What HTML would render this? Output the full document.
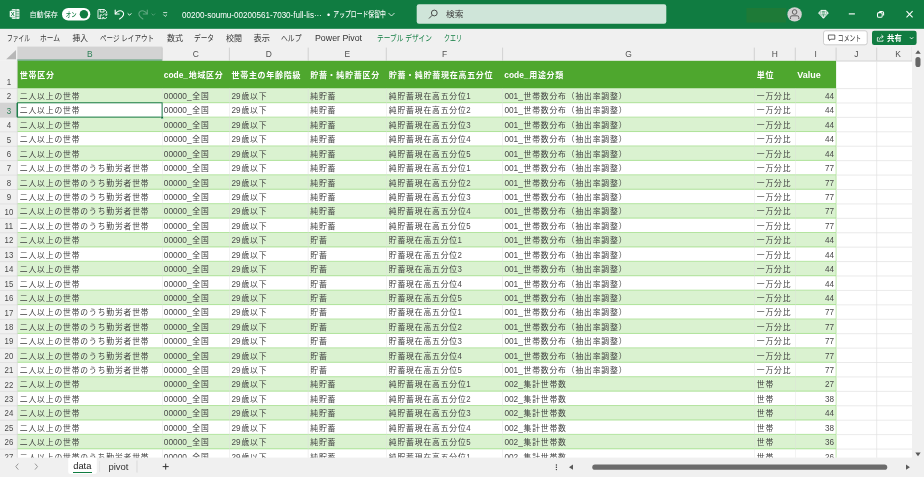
<!DOCTYPE html>
<html lang="ja"><head><meta charset="utf-8"><title>Excel</title>
<style>html,body{margin:0;padding:0;background:#f0f0f0;overflow:hidden}svg{display:block;font-family:"Liberation Sans","Noto Sans CJK JP",sans-serif;will-change:transform}text{white-space:pre}</style>
</head><body>
<svg width="924" height="477" viewBox="0 0 924 477">
<rect x="0.00" y="0.00" width="924.00" height="477.00" fill="#f0f0f0" />
<rect x="0.00" y="0.00" width="924.00" height="28.80" fill="#107c41" />
<rect x="416.7" y="4.2" width="249.6" height="19.6" rx="2.2" fill="#cfe5d9"/>
<rect x="746.50" y="8.00" width="39.50" height="14.50" fill="#1e7a37" />
<g><rect x="11.7" y="8.9" width="7.8" height="10.1" rx="1" fill="#dcece3"/><path d="M11.7 11.4 H19.5 M11.7 13.9 H19.5 M11.7 16.4 H19.5" stroke="#107c41" stroke-width="0.55"/><path d="M16 8.9 V19" stroke="#107c41" stroke-width="0.5"/><rect x="9.6" y="10.7" width="6" height="6.5" rx="0.8" fill="#fff" stroke="#107c41" stroke-width="0.35"/><text x="12.6" y="15.95" font-size="5.8" font-weight="700" fill="#107c41" text-anchor="middle">X</text></g>
<text x="29.50" y="17.20" font-size="7.3" fill="#fff" textLength="28.50" lengthAdjust="spacingAndGlyphs" >自動保存</text>
<rect x="62" y="8" width="28.3" height="12.5" rx="6.25" fill="#fff"/>
<text x="65.80" y="16.92" font-size="6.8" fill="#107c41" font-weight="500" textLength="10.80" lengthAdjust="spacingAndGlyphs" >オン</text>
<circle cx="83.9" cy="14.3" r="4.2" fill="#107c41"/>
<g fill="none" stroke="#fff" stroke-width="0.9" stroke-linejoin="round"><path d="M101.6 18.6 H98.9 a0.9 0.9 0 0 1 -.9 -.9 V10.4 a0.9 0.9 0 0 1 .9 -.9 H104.4 L106.6 11.7 V13.2"/><path d="M100.2 9.6 V12 H104 V9.6"/><path d="M100.2 18.5 V14.9 H102"/><path d="M102.7 15.7 a2.2 2.2 0 0 1 3.9 -.8 M106.9 13.5 V15.2 H105.2" stroke-width="0.8"/><path d="M106.8 17 a2.2 2.2 0 0 1 -3.9 .8 M102.6 19.2 V17.5 H104.3" stroke-width="0.8"/></g>
<g fill="none" stroke="#fff" stroke-width="1.1" stroke-linecap="round" stroke-linejoin="round"><path d="M115.2 10 V14 H119.2"/><path d="M115.4 13.8 C117 11 120.5 9.8 122.6 11.6 C124.6 13.4 123.8 16.3 119.6 19"/></g>
<path d="M127.7 13.4 L129.5 15.2 L131.3 13.4" fill="none" stroke="#fff" stroke-width="1"/>
<g fill="none" stroke="#5fa680" stroke-width="1.1" stroke-linecap="round" stroke-linejoin="round"><path d="M147.3 10 V14 H143.3"/><path d="M147.1 13.8 C145.5 11 142 9.8 139.9 11.6 C137.9 13.4 138.7 16.3 142.9 19"/></g>
<path d="M151.6 13.6 L153.3 15.3 L155 13.6" fill="none" stroke="#5fa680" stroke-width="0.8"/>
<path d="M163.2 12.6 H167.2 M163.4 14.6 L165.2 16.4 L167 14.6" fill="none" stroke="#fff" stroke-width="0.8"/>
<text x="182.00" y="17.61" font-size="8.4" fill="#fff" textLength="140.00" lengthAdjust="spacingAndGlyphs" >00200-soumu-00200561-7030-full-lis···</text>
<text x="327.00" y="17.83" font-size="9" fill="#fff" >•</text>
<text x="333.30" y="17.27" font-size="7.5" fill="#fff" font-weight="500" textLength="52.50" lengthAdjust="spacingAndGlyphs" >アップロード保留中</text>
<path d="M388.5 13 L391.5 16 L394.5 13" fill="none" stroke="#fff" stroke-width="0.8"/>
<g fill="none" stroke="#3b3b3b" stroke-width="0.9"><circle cx="434.3" cy="13" r="2.9"/><path d="M432.2 15.2 L429 18.5"/></g>
<text x="446.00" y="17.37" font-size="8.3" fill="#3b3b3b" textLength="17.50" lengthAdjust="spacingAndGlyphs" >検索</text>
<circle cx="794.6" cy="14.4" r="7.2" fill="#d2d2d2"/><g fill="none" stroke="#555" stroke-width="0.9"><circle cx="794.6" cy="12" r="2.3"/><path d="M790.4 19 V17.4 a1.6 1.6 0 0 1 1.6 -1.6 H797.2 a1.6 1.6 0 0 1 1.6 1.6 V19"/></g>
<g fill="none" stroke="#fff" stroke-width="0.95" stroke-linejoin="round"><path d="M820.9 10.4 H826 L828.2 13.1 L823.45 18.2 L818.7 13.1 Z" fill="rgba(255,255,255,0.35)"/><path d="M818.7 13.1 H828.2 M821.9 10.4 L821.2 13.1 L823.45 18.2 L825.7 13.1 L825 10.4" stroke-width="0.7"/></g>
<path d="M848.8 13.9 H854.9" stroke="#fff" stroke-width="1.15"/>
<g fill="none" stroke="#fff" stroke-width="1.05"><rect x="877.5" y="12.6" width="4.7" height="4.7" rx="1.4"/><path d="M879.3 11.4 H882 a1.6 1.6 0 0 1 1.6 1.6 V15.6"/></g>
<path d="M906.5 11.2 L912.6 17.3 M912.6 11.2 L906.5 17.3" stroke="#fff" stroke-width="1.1"/>
<text x="7.00" y="41.07" font-size="8.3" fill="#333" textLength="23.00" lengthAdjust="spacingAndGlyphs" >ファイル</text>
<text x="40.00" y="41.07" font-size="8.3" fill="#333" textLength="20.00" lengthAdjust="spacingAndGlyphs" >ホーム</text>
<text x="72.50" y="41.07" font-size="8.3" fill="#333" textLength="15.50" lengthAdjust="spacingAndGlyphs" >挿入</text>
<text x="100.00" y="41.07" font-size="8.3" fill="#333" textLength="54.00" lengthAdjust="spacingAndGlyphs" >ページ レイアウト</text>
<text x="167.00" y="41.07" font-size="8.3" fill="#333" textLength="16.00" lengthAdjust="spacingAndGlyphs" >数式</text>
<text x="194.00" y="41.07" font-size="8.3" fill="#333" textLength="20.00" lengthAdjust="spacingAndGlyphs" >データ</text>
<text x="226.00" y="41.07" font-size="8.3" fill="#333" textLength="16.00" lengthAdjust="spacingAndGlyphs" >校閲</text>
<text x="253.50" y="41.07" font-size="8.3" fill="#333" textLength="16.50" lengthAdjust="spacingAndGlyphs" >表示</text>
<text x="281.00" y="41.07" font-size="8.3" fill="#333" textLength="20.50" lengthAdjust="spacingAndGlyphs" >ヘルプ</text>
<text x="315.00" y="41.07" font-size="8.3" fill="#333" textLength="47.00" lengthAdjust="spacingAndGlyphs" >Power Pivot</text>
<text x="377.00" y="41.07" font-size="8.3" fill="#107c41" textLength="55.00" lengthAdjust="spacingAndGlyphs" >テーブル デザイン</text>
<text x="444.00" y="41.07" font-size="8.3" fill="#107c41" textLength="18.00" lengthAdjust="spacingAndGlyphs" >クエリ</text>
<rect x="823.5" y="30.8" width="43.7" height="14" rx="2.2" fill="#fff" stroke="#bdbdbd" stroke-width="0.7"/>
<path d="M828.4 35 H834.8 V39.2 H830.8 L829.5 40.6 V39.2 H828.4 Z" fill="none" stroke="#333" stroke-width="0.75"/>
<text x="837.80" y="41.07" font-size="8.3" fill="#333" textLength="23.40" lengthAdjust="spacingAndGlyphs" >コメント</text>
<rect x="872" y="30.8" width="44.6" height="14.2" rx="2.2" fill="#107c41"/>
<g fill="none" stroke="#fff" stroke-width="0.8"><path d="M878.6 37.6 H877.4 V41.2 H883 V39.8"/><path d="M879.4 39.6 C879.6 37.6 880.8 36.6 883 36.6 M881.4 34.9 L883.3 36.6 L881.4 38.3"/></g>
<text x="887.10" y="40.85" font-size="7.7" fill="#fff" font-weight="700" textLength="14.70" lengthAdjust="spacingAndGlyphs" >共有</text>
<path d="M910 37.3 L911.6 38.9 L913.2 37.3" fill="none" stroke="#fff" stroke-width="0.95"/>
<rect x="0.00" y="46.60" width="912.00" height="14.00" fill="#f0f0f0" />
<rect x="17.30" y="46.60" width="145.00" height="14.00" fill="#d3d3d3" />
<rect x="17.30" y="59.70" width="145.00" height="0.90" fill="#107c41" />
<path d="M16 49.9 V59.3 H6.2 Z" fill="#b7b7b7"/>
<text x="86.99" y="57.43" font-size="9.8" fill="#2e8058" textLength="5.62" lengthAdjust="spacingAndGlyphs" >B</text>
<line x1="162.30" y1="47.60" x2="162.30" y2="60.60" stroke="#c4c4c4" stroke-width="0.7" />
<text x="192.81" y="57.43" font-size="9.8" fill="#505050" textLength="6.09" lengthAdjust="spacingAndGlyphs" >C</text>
<line x1="229.40" y1="47.60" x2="229.40" y2="60.60" stroke="#c4c4c4" stroke-width="0.7" />
<text x="265.76" y="57.43" font-size="9.8" fill="#505050" textLength="6.09" lengthAdjust="spacingAndGlyphs" >D</text>
<line x1="308.20" y1="47.60" x2="308.20" y2="60.60" stroke="#c4c4c4" stroke-width="0.7" />
<text x="344.44" y="57.43" font-size="9.8" fill="#505050" textLength="5.62" lengthAdjust="spacingAndGlyphs" >E</text>
<line x1="386.30" y1="47.60" x2="386.30" y2="60.60" stroke="#c4c4c4" stroke-width="0.7" />
<text x="441.88" y="57.43" font-size="9.8" fill="#505050" textLength="5.15" lengthAdjust="spacingAndGlyphs" >F</text>
<line x1="502.60" y1="47.60" x2="502.60" y2="60.60" stroke="#c4c4c4" stroke-width="0.7" />
<text x="625.17" y="57.43" font-size="9.8" fill="#505050" textLength="6.56" lengthAdjust="spacingAndGlyphs" >G</text>
<line x1="754.30" y1="47.60" x2="754.30" y2="60.60" stroke="#c4c4c4" stroke-width="0.7" />
<text x="771.76" y="57.43" font-size="9.8" fill="#505050" textLength="6.09" lengthAdjust="spacingAndGlyphs" >H</text>
<line x1="795.30" y1="47.60" x2="795.30" y2="60.60" stroke="#c4c4c4" stroke-width="0.7" />
<text x="814.53" y="57.43" font-size="9.8" fill="#505050" textLength="2.34" lengthAdjust="spacingAndGlyphs" >I</text>
<line x1="836.10" y1="47.60" x2="836.10" y2="60.60" stroke="#c4c4c4" stroke-width="0.7" />
<text x="854.29" y="57.43" font-size="9.8" fill="#505050" textLength="4.21" lengthAdjust="spacingAndGlyphs" >J</text>
<line x1="876.70" y1="47.60" x2="876.70" y2="60.60" stroke="#c4c4c4" stroke-width="0.7" />
<text x="895.34" y="57.43" font-size="9.8" fill="#505050" textLength="5.62" lengthAdjust="spacingAndGlyphs" >K</text>
<line x1="912.00" y1="46.60" x2="912.00" y2="458.00" stroke="#d9d9d9" stroke-width="0.6" />
<rect x="0.00" y="60.80" width="912.00" height="397.00" fill="#fff" />
<rect x="0.00" y="60.80" width="17.30" height="397.00" fill="#f0f0f0" />
<rect x="17.30" y="60.80" width="818.80" height="27.75" fill="#4ea72e" />
<line x1="836.10" y1="61.00" x2="912.00" y2="61.00" stroke="#c6c6c6" stroke-width="0.8" />
<rect x="17.30" y="88.55" width="818.80" height="14.42" fill="#daf2d0" />
<rect x="17.30" y="117.39" width="818.80" height="14.42" fill="#daf2d0" />
<rect x="17.30" y="146.23" width="818.80" height="14.42" fill="#daf2d0" />
<rect x="17.30" y="175.07" width="818.80" height="14.42" fill="#daf2d0" />
<rect x="17.30" y="203.91" width="818.80" height="14.42" fill="#daf2d0" />
<rect x="17.30" y="232.75" width="818.80" height="14.42" fill="#daf2d0" />
<rect x="17.30" y="261.59" width="818.80" height="14.42" fill="#daf2d0" />
<rect x="17.30" y="290.43" width="818.80" height="14.42" fill="#daf2d0" />
<rect x="17.30" y="319.27" width="818.80" height="14.42" fill="#daf2d0" />
<rect x="17.30" y="348.11" width="818.80" height="14.42" fill="#daf2d0" />
<rect x="17.30" y="376.95" width="818.80" height="14.42" fill="#daf2d0" />
<rect x="17.30" y="405.79" width="818.80" height="14.42" fill="#daf2d0" />
<rect x="17.30" y="434.63" width="818.80" height="14.42" fill="#daf2d0" />
<line x1="17.30" y1="102.72" x2="836.10" y2="102.72" stroke="#9ddc84" stroke-width="0.75" />
<line x1="17.30" y1="117.14" x2="836.10" y2="117.14" stroke="#9ddc84" stroke-width="0.75" />
<line x1="17.30" y1="131.56" x2="836.10" y2="131.56" stroke="#9ddc84" stroke-width="0.75" />
<line x1="17.30" y1="145.98" x2="836.10" y2="145.98" stroke="#9ddc84" stroke-width="0.75" />
<line x1="17.30" y1="160.40" x2="836.10" y2="160.40" stroke="#9ddc84" stroke-width="0.75" />
<line x1="17.30" y1="174.82" x2="836.10" y2="174.82" stroke="#9ddc84" stroke-width="0.75" />
<line x1="17.30" y1="189.24" x2="836.10" y2="189.24" stroke="#9ddc84" stroke-width="0.75" />
<line x1="17.30" y1="203.66" x2="836.10" y2="203.66" stroke="#9ddc84" stroke-width="0.75" />
<line x1="17.30" y1="218.08" x2="836.10" y2="218.08" stroke="#9ddc84" stroke-width="0.75" />
<line x1="17.30" y1="232.50" x2="836.10" y2="232.50" stroke="#9ddc84" stroke-width="0.75" />
<line x1="17.30" y1="246.92" x2="836.10" y2="246.92" stroke="#9ddc84" stroke-width="0.75" />
<line x1="17.30" y1="261.34" x2="836.10" y2="261.34" stroke="#9ddc84" stroke-width="0.75" />
<line x1="17.30" y1="275.76" x2="836.10" y2="275.76" stroke="#9ddc84" stroke-width="0.75" />
<line x1="17.30" y1="290.18" x2="836.10" y2="290.18" stroke="#9ddc84" stroke-width="0.75" />
<line x1="17.30" y1="304.60" x2="836.10" y2="304.60" stroke="#9ddc84" stroke-width="0.75" />
<line x1="17.30" y1="319.02" x2="836.10" y2="319.02" stroke="#9ddc84" stroke-width="0.75" />
<line x1="17.30" y1="333.44" x2="836.10" y2="333.44" stroke="#9ddc84" stroke-width="0.75" />
<line x1="17.30" y1="347.86" x2="836.10" y2="347.86" stroke="#9ddc84" stroke-width="0.75" />
<line x1="17.30" y1="362.28" x2="836.10" y2="362.28" stroke="#9ddc84" stroke-width="0.75" />
<line x1="17.30" y1="376.70" x2="836.10" y2="376.70" stroke="#9ddc84" stroke-width="0.75" />
<line x1="17.30" y1="391.12" x2="836.10" y2="391.12" stroke="#9ddc84" stroke-width="0.75" />
<line x1="17.30" y1="405.54" x2="836.10" y2="405.54" stroke="#9ddc84" stroke-width="0.75" />
<line x1="17.30" y1="419.96" x2="836.10" y2="419.96" stroke="#9ddc84" stroke-width="0.75" />
<line x1="17.30" y1="434.38" x2="836.10" y2="434.38" stroke="#9ddc84" stroke-width="0.75" />
<line x1="17.30" y1="448.80" x2="836.10" y2="448.80" stroke="#9ddc84" stroke-width="0.75" />
<line x1="836.10" y1="88.55" x2="836.10" y2="457.80" stroke="#a8e08f" stroke-width="0.7" />
<line x1="162.30" y1="88.55" x2="162.30" y2="457.80" stroke="#dddddd" stroke-width="0.6" opacity="0.75"/>
<line x1="229.40" y1="88.55" x2="229.40" y2="457.80" stroke="#dddddd" stroke-width="0.6" opacity="0.75"/>
<line x1="308.20" y1="88.55" x2="308.20" y2="457.80" stroke="#dddddd" stroke-width="0.6" opacity="0.75"/>
<line x1="386.30" y1="88.55" x2="386.30" y2="457.80" stroke="#dddddd" stroke-width="0.6" opacity="0.75"/>
<line x1="502.60" y1="88.55" x2="502.60" y2="457.80" stroke="#dddddd" stroke-width="0.6" opacity="0.75"/>
<line x1="754.30" y1="88.55" x2="754.30" y2="457.80" stroke="#dddddd" stroke-width="0.6" opacity="0.75"/>
<line x1="795.30" y1="88.55" x2="795.30" y2="457.80" stroke="#dddddd" stroke-width="0.6" opacity="0.75"/>
<line x1="836.10" y1="88.55" x2="912.00" y2="88.55" stroke="#e1e1e1" stroke-width="0.7" />
<line x1="836.10" y1="102.97" x2="912.00" y2="102.97" stroke="#e1e1e1" stroke-width="0.7" />
<line x1="836.10" y1="117.39" x2="912.00" y2="117.39" stroke="#e1e1e1" stroke-width="0.7" />
<line x1="836.10" y1="131.81" x2="912.00" y2="131.81" stroke="#e1e1e1" stroke-width="0.7" />
<line x1="836.10" y1="146.23" x2="912.00" y2="146.23" stroke="#e1e1e1" stroke-width="0.7" />
<line x1="836.10" y1="160.65" x2="912.00" y2="160.65" stroke="#e1e1e1" stroke-width="0.7" />
<line x1="836.10" y1="175.07" x2="912.00" y2="175.07" stroke="#e1e1e1" stroke-width="0.7" />
<line x1="836.10" y1="189.49" x2="912.00" y2="189.49" stroke="#e1e1e1" stroke-width="0.7" />
<line x1="836.10" y1="203.91" x2="912.00" y2="203.91" stroke="#e1e1e1" stroke-width="0.7" />
<line x1="836.10" y1="218.33" x2="912.00" y2="218.33" stroke="#e1e1e1" stroke-width="0.7" />
<line x1="836.10" y1="232.75" x2="912.00" y2="232.75" stroke="#e1e1e1" stroke-width="0.7" />
<line x1="836.10" y1="247.17" x2="912.00" y2="247.17" stroke="#e1e1e1" stroke-width="0.7" />
<line x1="836.10" y1="261.59" x2="912.00" y2="261.59" stroke="#e1e1e1" stroke-width="0.7" />
<line x1="836.10" y1="276.01" x2="912.00" y2="276.01" stroke="#e1e1e1" stroke-width="0.7" />
<line x1="836.10" y1="290.43" x2="912.00" y2="290.43" stroke="#e1e1e1" stroke-width="0.7" />
<line x1="836.10" y1="304.85" x2="912.00" y2="304.85" stroke="#e1e1e1" stroke-width="0.7" />
<line x1="836.10" y1="319.27" x2="912.00" y2="319.27" stroke="#e1e1e1" stroke-width="0.7" />
<line x1="836.10" y1="333.69" x2="912.00" y2="333.69" stroke="#e1e1e1" stroke-width="0.7" />
<line x1="836.10" y1="348.11" x2="912.00" y2="348.11" stroke="#e1e1e1" stroke-width="0.7" />
<line x1="836.10" y1="362.53" x2="912.00" y2="362.53" stroke="#e1e1e1" stroke-width="0.7" />
<line x1="836.10" y1="376.95" x2="912.00" y2="376.95" stroke="#e1e1e1" stroke-width="0.7" />
<line x1="836.10" y1="391.37" x2="912.00" y2="391.37" stroke="#e1e1e1" stroke-width="0.7" />
<line x1="836.10" y1="405.79" x2="912.00" y2="405.79" stroke="#e1e1e1" stroke-width="0.7" />
<line x1="836.10" y1="420.21" x2="912.00" y2="420.21" stroke="#e1e1e1" stroke-width="0.7" />
<line x1="836.10" y1="434.63" x2="912.00" y2="434.63" stroke="#e1e1e1" stroke-width="0.7" />
<line x1="836.10" y1="449.05" x2="912.00" y2="449.05" stroke="#e1e1e1" stroke-width="0.7" />
<line x1="876.70" y1="60.80" x2="876.70" y2="457.80" stroke="#e1e1e1" stroke-width="0.7" />
<line x1="0.00" y1="88.55" x2="17.30" y2="88.55" stroke="#d6d6d6" stroke-width="0.6" />
<line x1="0.00" y1="102.97" x2="17.30" y2="102.97" stroke="#d6d6d6" stroke-width="0.6" />
<rect x="0.00" y="102.97" width="17.30" height="14.42" fill="#d3d3d3" />
<rect x="16.50" y="102.97" width="0.90" height="14.42" fill="#107c41" />
<line x1="0.00" y1="117.39" x2="17.30" y2="117.39" stroke="#d6d6d6" stroke-width="0.6" />
<line x1="0.00" y1="131.81" x2="17.30" y2="131.81" stroke="#d6d6d6" stroke-width="0.6" />
<line x1="0.00" y1="146.23" x2="17.30" y2="146.23" stroke="#d6d6d6" stroke-width="0.6" />
<line x1="0.00" y1="160.65" x2="17.30" y2="160.65" stroke="#d6d6d6" stroke-width="0.6" />
<line x1="0.00" y1="175.07" x2="17.30" y2="175.07" stroke="#d6d6d6" stroke-width="0.6" />
<line x1="0.00" y1="189.49" x2="17.30" y2="189.49" stroke="#d6d6d6" stroke-width="0.6" />
<line x1="0.00" y1="203.91" x2="17.30" y2="203.91" stroke="#d6d6d6" stroke-width="0.6" />
<line x1="0.00" y1="218.33" x2="17.30" y2="218.33" stroke="#d6d6d6" stroke-width="0.6" />
<line x1="0.00" y1="232.75" x2="17.30" y2="232.75" stroke="#d6d6d6" stroke-width="0.6" />
<line x1="0.00" y1="247.17" x2="17.30" y2="247.17" stroke="#d6d6d6" stroke-width="0.6" />
<line x1="0.00" y1="261.59" x2="17.30" y2="261.59" stroke="#d6d6d6" stroke-width="0.6" />
<line x1="0.00" y1="276.01" x2="17.30" y2="276.01" stroke="#d6d6d6" stroke-width="0.6" />
<line x1="0.00" y1="290.43" x2="17.30" y2="290.43" stroke="#d6d6d6" stroke-width="0.6" />
<line x1="0.00" y1="304.85" x2="17.30" y2="304.85" stroke="#d6d6d6" stroke-width="0.6" />
<line x1="0.00" y1="319.27" x2="17.30" y2="319.27" stroke="#d6d6d6" stroke-width="0.6" />
<line x1="0.00" y1="333.69" x2="17.30" y2="333.69" stroke="#d6d6d6" stroke-width="0.6" />
<line x1="0.00" y1="348.11" x2="17.30" y2="348.11" stroke="#d6d6d6" stroke-width="0.6" />
<line x1="0.00" y1="362.53" x2="17.30" y2="362.53" stroke="#d6d6d6" stroke-width="0.6" />
<line x1="0.00" y1="376.95" x2="17.30" y2="376.95" stroke="#d6d6d6" stroke-width="0.6" />
<line x1="0.00" y1="391.37" x2="17.30" y2="391.37" stroke="#d6d6d6" stroke-width="0.6" />
<line x1="0.00" y1="405.79" x2="17.30" y2="405.79" stroke="#d6d6d6" stroke-width="0.6" />
<line x1="0.00" y1="420.21" x2="17.30" y2="420.21" stroke="#d6d6d6" stroke-width="0.6" />
<line x1="0.00" y1="434.63" x2="17.30" y2="434.63" stroke="#d6d6d6" stroke-width="0.6" />
<line x1="0.00" y1="449.05" x2="17.30" y2="449.05" stroke="#d6d6d6" stroke-width="0.6" />
<line x1="17.30" y1="60.80" x2="17.30" y2="457.80" stroke="#d0d0d0" stroke-width="0.6" />
<clipPath id="gc"><rect x="0" y="60.8" width="912" height="397.00"/></clipPath>
<g clip-path="url(#gc)">
<text x="6.70" y="84.58" font-size="9.8" fill="#4a4a4a" textLength="4.40" lengthAdjust="spacingAndGlyphs" >1</text>
<text x="6.70" y="99.24" font-size="9.8" fill="#4a4a4a" textLength="4.40" lengthAdjust="spacingAndGlyphs" >2</text>
<text x="6.70" y="113.66" font-size="9.8" fill="#2e8058" textLength="4.40" lengthAdjust="spacingAndGlyphs" >3</text>
<text x="6.70" y="128.08" font-size="9.8" fill="#4a4a4a" textLength="4.40" lengthAdjust="spacingAndGlyphs" >4</text>
<text x="6.70" y="142.50" font-size="9.8" fill="#4a4a4a" textLength="4.40" lengthAdjust="spacingAndGlyphs" >5</text>
<text x="6.70" y="156.92" font-size="9.8" fill="#4a4a4a" textLength="4.40" lengthAdjust="spacingAndGlyphs" >6</text>
<text x="6.70" y="171.34" font-size="9.8" fill="#4a4a4a" textLength="4.40" lengthAdjust="spacingAndGlyphs" >7</text>
<text x="6.70" y="185.76" font-size="9.8" fill="#4a4a4a" textLength="4.40" lengthAdjust="spacingAndGlyphs" >8</text>
<text x="6.70" y="200.18" font-size="9.8" fill="#4a4a4a" textLength="4.40" lengthAdjust="spacingAndGlyphs" >9</text>
<text x="4.55" y="214.60" font-size="9.8" fill="#4a4a4a" textLength="8.70" lengthAdjust="spacingAndGlyphs" >10</text>
<text x="4.55" y="229.02" font-size="9.8" fill="#4a4a4a" textLength="8.70" lengthAdjust="spacingAndGlyphs" >11</text>
<text x="4.55" y="243.44" font-size="9.8" fill="#4a4a4a" textLength="8.70" lengthAdjust="spacingAndGlyphs" >12</text>
<text x="4.55" y="257.86" font-size="9.8" fill="#4a4a4a" textLength="8.70" lengthAdjust="spacingAndGlyphs" >13</text>
<text x="4.55" y="272.28" font-size="9.8" fill="#4a4a4a" textLength="8.70" lengthAdjust="spacingAndGlyphs" >14</text>
<text x="4.55" y="286.70" font-size="9.8" fill="#4a4a4a" textLength="8.70" lengthAdjust="spacingAndGlyphs" >15</text>
<text x="4.55" y="301.12" font-size="9.8" fill="#4a4a4a" textLength="8.70" lengthAdjust="spacingAndGlyphs" >16</text>
<text x="4.55" y="315.54" font-size="9.8" fill="#4a4a4a" textLength="8.70" lengthAdjust="spacingAndGlyphs" >17</text>
<text x="4.55" y="329.96" font-size="9.8" fill="#4a4a4a" textLength="8.70" lengthAdjust="spacingAndGlyphs" >18</text>
<text x="4.55" y="344.38" font-size="9.8" fill="#4a4a4a" textLength="8.70" lengthAdjust="spacingAndGlyphs" >19</text>
<text x="4.55" y="358.80" font-size="9.8" fill="#4a4a4a" textLength="8.70" lengthAdjust="spacingAndGlyphs" >20</text>
<text x="4.55" y="373.22" font-size="9.8" fill="#4a4a4a" textLength="8.70" lengthAdjust="spacingAndGlyphs" >21</text>
<text x="4.55" y="387.64" font-size="9.8" fill="#4a4a4a" textLength="8.70" lengthAdjust="spacingAndGlyphs" >22</text>
<text x="4.55" y="402.06" font-size="9.8" fill="#4a4a4a" textLength="8.70" lengthAdjust="spacingAndGlyphs" >23</text>
<text x="4.55" y="416.48" font-size="9.8" fill="#4a4a4a" textLength="8.70" lengthAdjust="spacingAndGlyphs" >24</text>
<text x="4.55" y="430.90" font-size="9.8" fill="#4a4a4a" textLength="8.70" lengthAdjust="spacingAndGlyphs" >25</text>
<text x="4.55" y="445.32" font-size="9.8" fill="#4a4a4a" textLength="8.70" lengthAdjust="spacingAndGlyphs" >26</text>
<text x="4.55" y="459.74" font-size="9.8" fill="#4a4a4a" textLength="8.70" lengthAdjust="spacingAndGlyphs" >27</text>
<text x="19.76" y="77.80" font-size="8.0" fill="#fff" font-weight="700" letter-spacing="0.72">世帯区分</text>
<text x="163.80" y="77.80" font-size="8.6" fill="#fff" font-weight="700" textLength="24.20" lengthAdjust="spacingAndGlyphs">code_</text>
<text x="188.66" y="77.80" font-size="8.0" fill="#fff" font-weight="700" letter-spacing="0.72">地域区分</text>
<text x="231.46" y="77.80" font-size="8.0" fill="#fff" font-weight="700" letter-spacing="0.72">世帯主の年齢階級</text>
<text x="310.16" y="77.80" font-size="8.0" fill="#fff" font-weight="700" letter-spacing="0.72">貯蓄・純貯蓄区分</text>
<text x="388.66" y="77.80" font-size="8.0" fill="#fff" font-weight="700" letter-spacing="0.72">貯蓄・純貯蓄現在高五分位</text>
<text x="504.30" y="77.80" font-size="8.6" fill="#fff" font-weight="700" textLength="24.20" lengthAdjust="spacingAndGlyphs">code_</text>
<text x="529.16" y="77.80" font-size="8.0" fill="#fff" font-weight="700" letter-spacing="0.72">用途分類</text>
<text x="756.66" y="77.80" font-size="8.0" fill="#fff" font-weight="700" letter-spacing="0.72">単位</text>
<text x="797.30" y="77.80" font-size="9.0" fill="#fff" font-weight="700" textLength="23.45" lengthAdjust="spacingAndGlyphs">Value</text>
<text x="19.82" y="99.06" font-size="7.8" fill="#3e3e3e" letter-spacing="0.85">二人以上の世帯</text>
<text x="163.80" y="99.06" font-size="9.7" fill="#4a4a4a" textLength="27.78" lengthAdjust="spacingAndGlyphs">00000_</text>
<text x="192.31" y="99.06" font-size="7.8" fill="#3e3e3e" letter-spacing="0.85">全国</text>
<text x="231.60" y="99.06" font-size="9.7" fill="#4a4a4a" textLength="9.06" lengthAdjust="spacingAndGlyphs">29</text>
<text x="241.38" y="99.06" font-size="7.8" fill="#3e3e3e" letter-spacing="0.85">歳以下</text>
<text x="310.32" y="99.06" font-size="7.8" fill="#3e3e3e" letter-spacing="0.85">純貯蓄</text>
<text x="388.82" y="99.06" font-size="7.8" fill="#3e3e3e" letter-spacing="0.85">純貯蓄現在高五分位</text>
<text x="466.25" y="99.06" font-size="9.7" fill="#4a4a4a" textLength="4.38" lengthAdjust="spacingAndGlyphs">1</text>
<text x="504.40" y="99.06" font-size="9.7" fill="#4a4a4a" textLength="18.42" lengthAdjust="spacingAndGlyphs">001_</text>
<text x="523.54" y="99.06" font-size="7.8" fill="#3e3e3e" letter-spacing="0.85">世帯数分布（抽出率調整）</text>
<text x="756.82" y="99.06" font-size="7.8" fill="#3e3e3e" letter-spacing="0.85">一万分比</text>
<text x="824.94" y="99.06" font-size="9.7" fill="#4a4a4a" textLength="9.06" lengthAdjust="spacingAndGlyphs">44</text>
<text x="19.82" y="113.48" font-size="7.8" fill="#3e3e3e" letter-spacing="0.85">二人以上の世帯</text>
<text x="163.80" y="113.48" font-size="9.7" fill="#4a4a4a" textLength="27.78" lengthAdjust="spacingAndGlyphs">00000_</text>
<text x="192.31" y="113.48" font-size="7.8" fill="#3e3e3e" letter-spacing="0.85">全国</text>
<text x="231.60" y="113.48" font-size="9.7" fill="#4a4a4a" textLength="9.06" lengthAdjust="spacingAndGlyphs">29</text>
<text x="241.38" y="113.48" font-size="7.8" fill="#3e3e3e" letter-spacing="0.85">歳以下</text>
<text x="310.32" y="113.48" font-size="7.8" fill="#3e3e3e" letter-spacing="0.85">純貯蓄</text>
<text x="388.82" y="113.48" font-size="7.8" fill="#3e3e3e" letter-spacing="0.85">純貯蓄現在高五分位</text>
<text x="466.25" y="113.48" font-size="9.7" fill="#4a4a4a" textLength="4.38" lengthAdjust="spacingAndGlyphs">2</text>
<text x="504.40" y="113.48" font-size="9.7" fill="#4a4a4a" textLength="18.42" lengthAdjust="spacingAndGlyphs">001_</text>
<text x="523.54" y="113.48" font-size="7.8" fill="#3e3e3e" letter-spacing="0.85">世帯数分布（抽出率調整）</text>
<text x="756.82" y="113.48" font-size="7.8" fill="#3e3e3e" letter-spacing="0.85">一万分比</text>
<text x="824.94" y="113.48" font-size="9.7" fill="#4a4a4a" textLength="9.06" lengthAdjust="spacingAndGlyphs">44</text>
<text x="19.82" y="127.90" font-size="7.8" fill="#3e3e3e" letter-spacing="0.85">二人以上の世帯</text>
<text x="163.80" y="127.90" font-size="9.7" fill="#4a4a4a" textLength="27.78" lengthAdjust="spacingAndGlyphs">00000_</text>
<text x="192.31" y="127.90" font-size="7.8" fill="#3e3e3e" letter-spacing="0.85">全国</text>
<text x="231.60" y="127.90" font-size="9.7" fill="#4a4a4a" textLength="9.06" lengthAdjust="spacingAndGlyphs">29</text>
<text x="241.38" y="127.90" font-size="7.8" fill="#3e3e3e" letter-spacing="0.85">歳以下</text>
<text x="310.32" y="127.90" font-size="7.8" fill="#3e3e3e" letter-spacing="0.85">純貯蓄</text>
<text x="388.82" y="127.90" font-size="7.8" fill="#3e3e3e" letter-spacing="0.85">純貯蓄現在高五分位</text>
<text x="466.25" y="127.90" font-size="9.7" fill="#4a4a4a" textLength="4.38" lengthAdjust="spacingAndGlyphs">3</text>
<text x="504.40" y="127.90" font-size="9.7" fill="#4a4a4a" textLength="18.42" lengthAdjust="spacingAndGlyphs">001_</text>
<text x="523.54" y="127.90" font-size="7.8" fill="#3e3e3e" letter-spacing="0.85">世帯数分布（抽出率調整）</text>
<text x="756.82" y="127.90" font-size="7.8" fill="#3e3e3e" letter-spacing="0.85">一万分比</text>
<text x="824.94" y="127.90" font-size="9.7" fill="#4a4a4a" textLength="9.06" lengthAdjust="spacingAndGlyphs">44</text>
<text x="19.82" y="142.32" font-size="7.8" fill="#3e3e3e" letter-spacing="0.85">二人以上の世帯</text>
<text x="163.80" y="142.32" font-size="9.7" fill="#4a4a4a" textLength="27.78" lengthAdjust="spacingAndGlyphs">00000_</text>
<text x="192.31" y="142.32" font-size="7.8" fill="#3e3e3e" letter-spacing="0.85">全国</text>
<text x="231.60" y="142.32" font-size="9.7" fill="#4a4a4a" textLength="9.06" lengthAdjust="spacingAndGlyphs">29</text>
<text x="241.38" y="142.32" font-size="7.8" fill="#3e3e3e" letter-spacing="0.85">歳以下</text>
<text x="310.32" y="142.32" font-size="7.8" fill="#3e3e3e" letter-spacing="0.85">純貯蓄</text>
<text x="388.82" y="142.32" font-size="7.8" fill="#3e3e3e" letter-spacing="0.85">純貯蓄現在高五分位</text>
<text x="466.25" y="142.32" font-size="9.7" fill="#4a4a4a" textLength="4.38" lengthAdjust="spacingAndGlyphs">4</text>
<text x="504.40" y="142.32" font-size="9.7" fill="#4a4a4a" textLength="18.42" lengthAdjust="spacingAndGlyphs">001_</text>
<text x="523.54" y="142.32" font-size="7.8" fill="#3e3e3e" letter-spacing="0.85">世帯数分布（抽出率調整）</text>
<text x="756.82" y="142.32" font-size="7.8" fill="#3e3e3e" letter-spacing="0.85">一万分比</text>
<text x="824.94" y="142.32" font-size="9.7" fill="#4a4a4a" textLength="9.06" lengthAdjust="spacingAndGlyphs">44</text>
<text x="19.82" y="156.74" font-size="7.8" fill="#3e3e3e" letter-spacing="0.85">二人以上の世帯</text>
<text x="163.80" y="156.74" font-size="9.7" fill="#4a4a4a" textLength="27.78" lengthAdjust="spacingAndGlyphs">00000_</text>
<text x="192.31" y="156.74" font-size="7.8" fill="#3e3e3e" letter-spacing="0.85">全国</text>
<text x="231.60" y="156.74" font-size="9.7" fill="#4a4a4a" textLength="9.06" lengthAdjust="spacingAndGlyphs">29</text>
<text x="241.38" y="156.74" font-size="7.8" fill="#3e3e3e" letter-spacing="0.85">歳以下</text>
<text x="310.32" y="156.74" font-size="7.8" fill="#3e3e3e" letter-spacing="0.85">純貯蓄</text>
<text x="388.82" y="156.74" font-size="7.8" fill="#3e3e3e" letter-spacing="0.85">純貯蓄現在高五分位</text>
<text x="466.25" y="156.74" font-size="9.7" fill="#4a4a4a" textLength="4.38" lengthAdjust="spacingAndGlyphs">5</text>
<text x="504.40" y="156.74" font-size="9.7" fill="#4a4a4a" textLength="18.42" lengthAdjust="spacingAndGlyphs">001_</text>
<text x="523.54" y="156.74" font-size="7.8" fill="#3e3e3e" letter-spacing="0.85">世帯数分布（抽出率調整）</text>
<text x="756.82" y="156.74" font-size="7.8" fill="#3e3e3e" letter-spacing="0.85">一万分比</text>
<text x="824.94" y="156.74" font-size="9.7" fill="#4a4a4a" textLength="9.06" lengthAdjust="spacingAndGlyphs">44</text>
<text x="19.82" y="171.16" font-size="7.8" fill="#3e3e3e" letter-spacing="0.85">二人以上の世帯のうち勤労者世帯</text>
<text x="163.80" y="171.16" font-size="9.7" fill="#4a4a4a" textLength="27.78" lengthAdjust="spacingAndGlyphs">00000_</text>
<text x="192.31" y="171.16" font-size="7.8" fill="#3e3e3e" letter-spacing="0.85">全国</text>
<text x="231.60" y="171.16" font-size="9.7" fill="#4a4a4a" textLength="9.06" lengthAdjust="spacingAndGlyphs">29</text>
<text x="241.38" y="171.16" font-size="7.8" fill="#3e3e3e" letter-spacing="0.85">歳以下</text>
<text x="310.32" y="171.16" font-size="7.8" fill="#3e3e3e" letter-spacing="0.85">純貯蓄</text>
<text x="388.82" y="171.16" font-size="7.8" fill="#3e3e3e" letter-spacing="0.85">純貯蓄現在高五分位</text>
<text x="466.25" y="171.16" font-size="9.7" fill="#4a4a4a" textLength="4.38" lengthAdjust="spacingAndGlyphs">1</text>
<text x="504.40" y="171.16" font-size="9.7" fill="#4a4a4a" textLength="18.42" lengthAdjust="spacingAndGlyphs">001_</text>
<text x="523.54" y="171.16" font-size="7.8" fill="#3e3e3e" letter-spacing="0.85">世帯数分布（抽出率調整）</text>
<text x="756.82" y="171.16" font-size="7.8" fill="#3e3e3e" letter-spacing="0.85">一万分比</text>
<text x="824.94" y="171.16" font-size="9.7" fill="#4a4a4a" textLength="9.06" lengthAdjust="spacingAndGlyphs">77</text>
<text x="19.82" y="185.58" font-size="7.8" fill="#3e3e3e" letter-spacing="0.85">二人以上の世帯のうち勤労者世帯</text>
<text x="163.80" y="185.58" font-size="9.7" fill="#4a4a4a" textLength="27.78" lengthAdjust="spacingAndGlyphs">00000_</text>
<text x="192.31" y="185.58" font-size="7.8" fill="#3e3e3e" letter-spacing="0.85">全国</text>
<text x="231.60" y="185.58" font-size="9.7" fill="#4a4a4a" textLength="9.06" lengthAdjust="spacingAndGlyphs">29</text>
<text x="241.38" y="185.58" font-size="7.8" fill="#3e3e3e" letter-spacing="0.85">歳以下</text>
<text x="310.32" y="185.58" font-size="7.8" fill="#3e3e3e" letter-spacing="0.85">純貯蓄</text>
<text x="388.82" y="185.58" font-size="7.8" fill="#3e3e3e" letter-spacing="0.85">純貯蓄現在高五分位</text>
<text x="466.25" y="185.58" font-size="9.7" fill="#4a4a4a" textLength="4.38" lengthAdjust="spacingAndGlyphs">2</text>
<text x="504.40" y="185.58" font-size="9.7" fill="#4a4a4a" textLength="18.42" lengthAdjust="spacingAndGlyphs">001_</text>
<text x="523.54" y="185.58" font-size="7.8" fill="#3e3e3e" letter-spacing="0.85">世帯数分布（抽出率調整）</text>
<text x="756.82" y="185.58" font-size="7.8" fill="#3e3e3e" letter-spacing="0.85">一万分比</text>
<text x="824.94" y="185.58" font-size="9.7" fill="#4a4a4a" textLength="9.06" lengthAdjust="spacingAndGlyphs">77</text>
<text x="19.82" y="200.00" font-size="7.8" fill="#3e3e3e" letter-spacing="0.85">二人以上の世帯のうち勤労者世帯</text>
<text x="163.80" y="200.00" font-size="9.7" fill="#4a4a4a" textLength="27.78" lengthAdjust="spacingAndGlyphs">00000_</text>
<text x="192.31" y="200.00" font-size="7.8" fill="#3e3e3e" letter-spacing="0.85">全国</text>
<text x="231.60" y="200.00" font-size="9.7" fill="#4a4a4a" textLength="9.06" lengthAdjust="spacingAndGlyphs">29</text>
<text x="241.38" y="200.00" font-size="7.8" fill="#3e3e3e" letter-spacing="0.85">歳以下</text>
<text x="310.32" y="200.00" font-size="7.8" fill="#3e3e3e" letter-spacing="0.85">純貯蓄</text>
<text x="388.82" y="200.00" font-size="7.8" fill="#3e3e3e" letter-spacing="0.85">純貯蓄現在高五分位</text>
<text x="466.25" y="200.00" font-size="9.7" fill="#4a4a4a" textLength="4.38" lengthAdjust="spacingAndGlyphs">3</text>
<text x="504.40" y="200.00" font-size="9.7" fill="#4a4a4a" textLength="18.42" lengthAdjust="spacingAndGlyphs">001_</text>
<text x="523.54" y="200.00" font-size="7.8" fill="#3e3e3e" letter-spacing="0.85">世帯数分布（抽出率調整）</text>
<text x="756.82" y="200.00" font-size="7.8" fill="#3e3e3e" letter-spacing="0.85">一万分比</text>
<text x="824.94" y="200.00" font-size="9.7" fill="#4a4a4a" textLength="9.06" lengthAdjust="spacingAndGlyphs">77</text>
<text x="19.82" y="214.42" font-size="7.8" fill="#3e3e3e" letter-spacing="0.85">二人以上の世帯のうち勤労者世帯</text>
<text x="163.80" y="214.42" font-size="9.7" fill="#4a4a4a" textLength="27.78" lengthAdjust="spacingAndGlyphs">00000_</text>
<text x="192.31" y="214.42" font-size="7.8" fill="#3e3e3e" letter-spacing="0.85">全国</text>
<text x="231.60" y="214.42" font-size="9.7" fill="#4a4a4a" textLength="9.06" lengthAdjust="spacingAndGlyphs">29</text>
<text x="241.38" y="214.42" font-size="7.8" fill="#3e3e3e" letter-spacing="0.85">歳以下</text>
<text x="310.32" y="214.42" font-size="7.8" fill="#3e3e3e" letter-spacing="0.85">純貯蓄</text>
<text x="388.82" y="214.42" font-size="7.8" fill="#3e3e3e" letter-spacing="0.85">純貯蓄現在高五分位</text>
<text x="466.25" y="214.42" font-size="9.7" fill="#4a4a4a" textLength="4.38" lengthAdjust="spacingAndGlyphs">4</text>
<text x="504.40" y="214.42" font-size="9.7" fill="#4a4a4a" textLength="18.42" lengthAdjust="spacingAndGlyphs">001_</text>
<text x="523.54" y="214.42" font-size="7.8" fill="#3e3e3e" letter-spacing="0.85">世帯数分布（抽出率調整）</text>
<text x="756.82" y="214.42" font-size="7.8" fill="#3e3e3e" letter-spacing="0.85">一万分比</text>
<text x="824.94" y="214.42" font-size="9.7" fill="#4a4a4a" textLength="9.06" lengthAdjust="spacingAndGlyphs">77</text>
<text x="19.82" y="228.84" font-size="7.8" fill="#3e3e3e" letter-spacing="0.85">二人以上の世帯のうち勤労者世帯</text>
<text x="163.80" y="228.84" font-size="9.7" fill="#4a4a4a" textLength="27.78" lengthAdjust="spacingAndGlyphs">00000_</text>
<text x="192.31" y="228.84" font-size="7.8" fill="#3e3e3e" letter-spacing="0.85">全国</text>
<text x="231.60" y="228.84" font-size="9.7" fill="#4a4a4a" textLength="9.06" lengthAdjust="spacingAndGlyphs">29</text>
<text x="241.38" y="228.84" font-size="7.8" fill="#3e3e3e" letter-spacing="0.85">歳以下</text>
<text x="310.32" y="228.84" font-size="7.8" fill="#3e3e3e" letter-spacing="0.85">純貯蓄</text>
<text x="388.82" y="228.84" font-size="7.8" fill="#3e3e3e" letter-spacing="0.85">純貯蓄現在高五分位</text>
<text x="466.25" y="228.84" font-size="9.7" fill="#4a4a4a" textLength="4.38" lengthAdjust="spacingAndGlyphs">5</text>
<text x="504.40" y="228.84" font-size="9.7" fill="#4a4a4a" textLength="18.42" lengthAdjust="spacingAndGlyphs">001_</text>
<text x="523.54" y="228.84" font-size="7.8" fill="#3e3e3e" letter-spacing="0.85">世帯数分布（抽出率調整）</text>
<text x="756.82" y="228.84" font-size="7.8" fill="#3e3e3e" letter-spacing="0.85">一万分比</text>
<text x="824.94" y="228.84" font-size="9.7" fill="#4a4a4a" textLength="9.06" lengthAdjust="spacingAndGlyphs">77</text>
<text x="19.82" y="243.26" font-size="7.8" fill="#3e3e3e" letter-spacing="0.85">二人以上の世帯</text>
<text x="163.80" y="243.26" font-size="9.7" fill="#4a4a4a" textLength="27.78" lengthAdjust="spacingAndGlyphs">00000_</text>
<text x="192.31" y="243.26" font-size="7.8" fill="#3e3e3e" letter-spacing="0.85">全国</text>
<text x="231.60" y="243.26" font-size="9.7" fill="#4a4a4a" textLength="9.06" lengthAdjust="spacingAndGlyphs">29</text>
<text x="241.38" y="243.26" font-size="7.8" fill="#3e3e3e" letter-spacing="0.85">歳以下</text>
<text x="310.32" y="243.26" font-size="7.8" fill="#3e3e3e" letter-spacing="0.85">貯蓄</text>
<text x="388.82" y="243.26" font-size="7.8" fill="#3e3e3e" letter-spacing="0.85">貯蓄現在高五分位</text>
<text x="457.60" y="243.26" font-size="9.7" fill="#4a4a4a" textLength="4.38" lengthAdjust="spacingAndGlyphs">1</text>
<text x="504.40" y="243.26" font-size="9.7" fill="#4a4a4a" textLength="18.42" lengthAdjust="spacingAndGlyphs">001_</text>
<text x="523.54" y="243.26" font-size="7.8" fill="#3e3e3e" letter-spacing="0.85">世帯数分布（抽出率調整）</text>
<text x="756.82" y="243.26" font-size="7.8" fill="#3e3e3e" letter-spacing="0.85">一万分比</text>
<text x="824.94" y="243.26" font-size="9.7" fill="#4a4a4a" textLength="9.06" lengthAdjust="spacingAndGlyphs">44</text>
<text x="19.82" y="257.68" font-size="7.8" fill="#3e3e3e" letter-spacing="0.85">二人以上の世帯</text>
<text x="163.80" y="257.68" font-size="9.7" fill="#4a4a4a" textLength="27.78" lengthAdjust="spacingAndGlyphs">00000_</text>
<text x="192.31" y="257.68" font-size="7.8" fill="#3e3e3e" letter-spacing="0.85">全国</text>
<text x="231.60" y="257.68" font-size="9.7" fill="#4a4a4a" textLength="9.06" lengthAdjust="spacingAndGlyphs">29</text>
<text x="241.38" y="257.68" font-size="7.8" fill="#3e3e3e" letter-spacing="0.85">歳以下</text>
<text x="310.32" y="257.68" font-size="7.8" fill="#3e3e3e" letter-spacing="0.85">貯蓄</text>
<text x="388.82" y="257.68" font-size="7.8" fill="#3e3e3e" letter-spacing="0.85">貯蓄現在高五分位</text>
<text x="457.60" y="257.68" font-size="9.7" fill="#4a4a4a" textLength="4.38" lengthAdjust="spacingAndGlyphs">2</text>
<text x="504.40" y="257.68" font-size="9.7" fill="#4a4a4a" textLength="18.42" lengthAdjust="spacingAndGlyphs">001_</text>
<text x="523.54" y="257.68" font-size="7.8" fill="#3e3e3e" letter-spacing="0.85">世帯数分布（抽出率調整）</text>
<text x="756.82" y="257.68" font-size="7.8" fill="#3e3e3e" letter-spacing="0.85">一万分比</text>
<text x="824.94" y="257.68" font-size="9.7" fill="#4a4a4a" textLength="9.06" lengthAdjust="spacingAndGlyphs">44</text>
<text x="19.82" y="272.10" font-size="7.8" fill="#3e3e3e" letter-spacing="0.85">二人以上の世帯</text>
<text x="163.80" y="272.10" font-size="9.7" fill="#4a4a4a" textLength="27.78" lengthAdjust="spacingAndGlyphs">00000_</text>
<text x="192.31" y="272.10" font-size="7.8" fill="#3e3e3e" letter-spacing="0.85">全国</text>
<text x="231.60" y="272.10" font-size="9.7" fill="#4a4a4a" textLength="9.06" lengthAdjust="spacingAndGlyphs">29</text>
<text x="241.38" y="272.10" font-size="7.8" fill="#3e3e3e" letter-spacing="0.85">歳以下</text>
<text x="310.32" y="272.10" font-size="7.8" fill="#3e3e3e" letter-spacing="0.85">貯蓄</text>
<text x="388.82" y="272.10" font-size="7.8" fill="#3e3e3e" letter-spacing="0.85">貯蓄現在高五分位</text>
<text x="457.60" y="272.10" font-size="9.7" fill="#4a4a4a" textLength="4.38" lengthAdjust="spacingAndGlyphs">3</text>
<text x="504.40" y="272.10" font-size="9.7" fill="#4a4a4a" textLength="18.42" lengthAdjust="spacingAndGlyphs">001_</text>
<text x="523.54" y="272.10" font-size="7.8" fill="#3e3e3e" letter-spacing="0.85">世帯数分布（抽出率調整）</text>
<text x="756.82" y="272.10" font-size="7.8" fill="#3e3e3e" letter-spacing="0.85">一万分比</text>
<text x="824.94" y="272.10" font-size="9.7" fill="#4a4a4a" textLength="9.06" lengthAdjust="spacingAndGlyphs">44</text>
<text x="19.82" y="286.52" font-size="7.8" fill="#3e3e3e" letter-spacing="0.85">二人以上の世帯</text>
<text x="163.80" y="286.52" font-size="9.7" fill="#4a4a4a" textLength="27.78" lengthAdjust="spacingAndGlyphs">00000_</text>
<text x="192.31" y="286.52" font-size="7.8" fill="#3e3e3e" letter-spacing="0.85">全国</text>
<text x="231.60" y="286.52" font-size="9.7" fill="#4a4a4a" textLength="9.06" lengthAdjust="spacingAndGlyphs">29</text>
<text x="241.38" y="286.52" font-size="7.8" fill="#3e3e3e" letter-spacing="0.85">歳以下</text>
<text x="310.32" y="286.52" font-size="7.8" fill="#3e3e3e" letter-spacing="0.85">貯蓄</text>
<text x="388.82" y="286.52" font-size="7.8" fill="#3e3e3e" letter-spacing="0.85">貯蓄現在高五分位</text>
<text x="457.60" y="286.52" font-size="9.7" fill="#4a4a4a" textLength="4.38" lengthAdjust="spacingAndGlyphs">4</text>
<text x="504.40" y="286.52" font-size="9.7" fill="#4a4a4a" textLength="18.42" lengthAdjust="spacingAndGlyphs">001_</text>
<text x="523.54" y="286.52" font-size="7.8" fill="#3e3e3e" letter-spacing="0.85">世帯数分布（抽出率調整）</text>
<text x="756.82" y="286.52" font-size="7.8" fill="#3e3e3e" letter-spacing="0.85">一万分比</text>
<text x="824.94" y="286.52" font-size="9.7" fill="#4a4a4a" textLength="9.06" lengthAdjust="spacingAndGlyphs">44</text>
<text x="19.82" y="300.94" font-size="7.8" fill="#3e3e3e" letter-spacing="0.85">二人以上の世帯</text>
<text x="163.80" y="300.94" font-size="9.7" fill="#4a4a4a" textLength="27.78" lengthAdjust="spacingAndGlyphs">00000_</text>
<text x="192.31" y="300.94" font-size="7.8" fill="#3e3e3e" letter-spacing="0.85">全国</text>
<text x="231.60" y="300.94" font-size="9.7" fill="#4a4a4a" textLength="9.06" lengthAdjust="spacingAndGlyphs">29</text>
<text x="241.38" y="300.94" font-size="7.8" fill="#3e3e3e" letter-spacing="0.85">歳以下</text>
<text x="310.32" y="300.94" font-size="7.8" fill="#3e3e3e" letter-spacing="0.85">貯蓄</text>
<text x="388.82" y="300.94" font-size="7.8" fill="#3e3e3e" letter-spacing="0.85">貯蓄現在高五分位</text>
<text x="457.60" y="300.94" font-size="9.7" fill="#4a4a4a" textLength="4.38" lengthAdjust="spacingAndGlyphs">5</text>
<text x="504.40" y="300.94" font-size="9.7" fill="#4a4a4a" textLength="18.42" lengthAdjust="spacingAndGlyphs">001_</text>
<text x="523.54" y="300.94" font-size="7.8" fill="#3e3e3e" letter-spacing="0.85">世帯数分布（抽出率調整）</text>
<text x="756.82" y="300.94" font-size="7.8" fill="#3e3e3e" letter-spacing="0.85">一万分比</text>
<text x="824.94" y="300.94" font-size="9.7" fill="#4a4a4a" textLength="9.06" lengthAdjust="spacingAndGlyphs">44</text>
<text x="19.82" y="315.36" font-size="7.8" fill="#3e3e3e" letter-spacing="0.85">二人以上の世帯のうち勤労者世帯</text>
<text x="163.80" y="315.36" font-size="9.7" fill="#4a4a4a" textLength="27.78" lengthAdjust="spacingAndGlyphs">00000_</text>
<text x="192.31" y="315.36" font-size="7.8" fill="#3e3e3e" letter-spacing="0.85">全国</text>
<text x="231.60" y="315.36" font-size="9.7" fill="#4a4a4a" textLength="9.06" lengthAdjust="spacingAndGlyphs">29</text>
<text x="241.38" y="315.36" font-size="7.8" fill="#3e3e3e" letter-spacing="0.85">歳以下</text>
<text x="310.32" y="315.36" font-size="7.8" fill="#3e3e3e" letter-spacing="0.85">貯蓄</text>
<text x="388.82" y="315.36" font-size="7.8" fill="#3e3e3e" letter-spacing="0.85">貯蓄現在高五分位</text>
<text x="457.60" y="315.36" font-size="9.7" fill="#4a4a4a" textLength="4.38" lengthAdjust="spacingAndGlyphs">1</text>
<text x="504.40" y="315.36" font-size="9.7" fill="#4a4a4a" textLength="18.42" lengthAdjust="spacingAndGlyphs">001_</text>
<text x="523.54" y="315.36" font-size="7.8" fill="#3e3e3e" letter-spacing="0.85">世帯数分布（抽出率調整）</text>
<text x="756.82" y="315.36" font-size="7.8" fill="#3e3e3e" letter-spacing="0.85">一万分比</text>
<text x="824.94" y="315.36" font-size="9.7" fill="#4a4a4a" textLength="9.06" lengthAdjust="spacingAndGlyphs">77</text>
<text x="19.82" y="329.78" font-size="7.8" fill="#3e3e3e" letter-spacing="0.85">二人以上の世帯のうち勤労者世帯</text>
<text x="163.80" y="329.78" font-size="9.7" fill="#4a4a4a" textLength="27.78" lengthAdjust="spacingAndGlyphs">00000_</text>
<text x="192.31" y="329.78" font-size="7.8" fill="#3e3e3e" letter-spacing="0.85">全国</text>
<text x="231.60" y="329.78" font-size="9.7" fill="#4a4a4a" textLength="9.06" lengthAdjust="spacingAndGlyphs">29</text>
<text x="241.38" y="329.78" font-size="7.8" fill="#3e3e3e" letter-spacing="0.85">歳以下</text>
<text x="310.32" y="329.78" font-size="7.8" fill="#3e3e3e" letter-spacing="0.85">貯蓄</text>
<text x="388.82" y="329.78" font-size="7.8" fill="#3e3e3e" letter-spacing="0.85">貯蓄現在高五分位</text>
<text x="457.60" y="329.78" font-size="9.7" fill="#4a4a4a" textLength="4.38" lengthAdjust="spacingAndGlyphs">2</text>
<text x="504.40" y="329.78" font-size="9.7" fill="#4a4a4a" textLength="18.42" lengthAdjust="spacingAndGlyphs">001_</text>
<text x="523.54" y="329.78" font-size="7.8" fill="#3e3e3e" letter-spacing="0.85">世帯数分布（抽出率調整）</text>
<text x="756.82" y="329.78" font-size="7.8" fill="#3e3e3e" letter-spacing="0.85">一万分比</text>
<text x="824.94" y="329.78" font-size="9.7" fill="#4a4a4a" textLength="9.06" lengthAdjust="spacingAndGlyphs">77</text>
<text x="19.82" y="344.20" font-size="7.8" fill="#3e3e3e" letter-spacing="0.85">二人以上の世帯のうち勤労者世帯</text>
<text x="163.80" y="344.20" font-size="9.7" fill="#4a4a4a" textLength="27.78" lengthAdjust="spacingAndGlyphs">00000_</text>
<text x="192.31" y="344.20" font-size="7.8" fill="#3e3e3e" letter-spacing="0.85">全国</text>
<text x="231.60" y="344.20" font-size="9.7" fill="#4a4a4a" textLength="9.06" lengthAdjust="spacingAndGlyphs">29</text>
<text x="241.38" y="344.20" font-size="7.8" fill="#3e3e3e" letter-spacing="0.85">歳以下</text>
<text x="310.32" y="344.20" font-size="7.8" fill="#3e3e3e" letter-spacing="0.85">貯蓄</text>
<text x="388.82" y="344.20" font-size="7.8" fill="#3e3e3e" letter-spacing="0.85">貯蓄現在高五分位</text>
<text x="457.60" y="344.20" font-size="9.7" fill="#4a4a4a" textLength="4.38" lengthAdjust="spacingAndGlyphs">3</text>
<text x="504.40" y="344.20" font-size="9.7" fill="#4a4a4a" textLength="18.42" lengthAdjust="spacingAndGlyphs">001_</text>
<text x="523.54" y="344.20" font-size="7.8" fill="#3e3e3e" letter-spacing="0.85">世帯数分布（抽出率調整）</text>
<text x="756.82" y="344.20" font-size="7.8" fill="#3e3e3e" letter-spacing="0.85">一万分比</text>
<text x="824.94" y="344.20" font-size="9.7" fill="#4a4a4a" textLength="9.06" lengthAdjust="spacingAndGlyphs">77</text>
<text x="19.82" y="358.62" font-size="7.8" fill="#3e3e3e" letter-spacing="0.85">二人以上の世帯のうち勤労者世帯</text>
<text x="163.80" y="358.62" font-size="9.7" fill="#4a4a4a" textLength="27.78" lengthAdjust="spacingAndGlyphs">00000_</text>
<text x="192.31" y="358.62" font-size="7.8" fill="#3e3e3e" letter-spacing="0.85">全国</text>
<text x="231.60" y="358.62" font-size="9.7" fill="#4a4a4a" textLength="9.06" lengthAdjust="spacingAndGlyphs">29</text>
<text x="241.38" y="358.62" font-size="7.8" fill="#3e3e3e" letter-spacing="0.85">歳以下</text>
<text x="310.32" y="358.62" font-size="7.8" fill="#3e3e3e" letter-spacing="0.85">貯蓄</text>
<text x="388.82" y="358.62" font-size="7.8" fill="#3e3e3e" letter-spacing="0.85">貯蓄現在高五分位</text>
<text x="457.60" y="358.62" font-size="9.7" fill="#4a4a4a" textLength="4.38" lengthAdjust="spacingAndGlyphs">4</text>
<text x="504.40" y="358.62" font-size="9.7" fill="#4a4a4a" textLength="18.42" lengthAdjust="spacingAndGlyphs">001_</text>
<text x="523.54" y="358.62" font-size="7.8" fill="#3e3e3e" letter-spacing="0.85">世帯数分布（抽出率調整）</text>
<text x="756.82" y="358.62" font-size="7.8" fill="#3e3e3e" letter-spacing="0.85">一万分比</text>
<text x="824.94" y="358.62" font-size="9.7" fill="#4a4a4a" textLength="9.06" lengthAdjust="spacingAndGlyphs">77</text>
<text x="19.82" y="373.04" font-size="7.8" fill="#3e3e3e" letter-spacing="0.85">二人以上の世帯のうち勤労者世帯</text>
<text x="163.80" y="373.04" font-size="9.7" fill="#4a4a4a" textLength="27.78" lengthAdjust="spacingAndGlyphs">00000_</text>
<text x="192.31" y="373.04" font-size="7.8" fill="#3e3e3e" letter-spacing="0.85">全国</text>
<text x="231.60" y="373.04" font-size="9.7" fill="#4a4a4a" textLength="9.06" lengthAdjust="spacingAndGlyphs">29</text>
<text x="241.38" y="373.04" font-size="7.8" fill="#3e3e3e" letter-spacing="0.85">歳以下</text>
<text x="310.32" y="373.04" font-size="7.8" fill="#3e3e3e" letter-spacing="0.85">貯蓄</text>
<text x="388.82" y="373.04" font-size="7.8" fill="#3e3e3e" letter-spacing="0.85">貯蓄現在高五分位</text>
<text x="457.60" y="373.04" font-size="9.7" fill="#4a4a4a" textLength="4.38" lengthAdjust="spacingAndGlyphs">5</text>
<text x="504.40" y="373.04" font-size="9.7" fill="#4a4a4a" textLength="18.42" lengthAdjust="spacingAndGlyphs">001_</text>
<text x="523.54" y="373.04" font-size="7.8" fill="#3e3e3e" letter-spacing="0.85">世帯数分布（抽出率調整）</text>
<text x="756.82" y="373.04" font-size="7.8" fill="#3e3e3e" letter-spacing="0.85">一万分比</text>
<text x="824.94" y="373.04" font-size="9.7" fill="#4a4a4a" textLength="9.06" lengthAdjust="spacingAndGlyphs">77</text>
<text x="19.82" y="387.46" font-size="7.8" fill="#3e3e3e" letter-spacing="0.85">二人以上の世帯</text>
<text x="163.80" y="387.46" font-size="9.7" fill="#4a4a4a" textLength="27.78" lengthAdjust="spacingAndGlyphs">00000_</text>
<text x="192.31" y="387.46" font-size="7.8" fill="#3e3e3e" letter-spacing="0.85">全国</text>
<text x="231.60" y="387.46" font-size="9.7" fill="#4a4a4a" textLength="9.06" lengthAdjust="spacingAndGlyphs">29</text>
<text x="241.38" y="387.46" font-size="7.8" fill="#3e3e3e" letter-spacing="0.85">歳以下</text>
<text x="310.32" y="387.46" font-size="7.8" fill="#3e3e3e" letter-spacing="0.85">純貯蓄</text>
<text x="388.82" y="387.46" font-size="7.8" fill="#3e3e3e" letter-spacing="0.85">純貯蓄現在高五分位</text>
<text x="466.25" y="387.46" font-size="9.7" fill="#4a4a4a" textLength="4.38" lengthAdjust="spacingAndGlyphs">1</text>
<text x="504.40" y="387.46" font-size="9.7" fill="#4a4a4a" textLength="18.42" lengthAdjust="spacingAndGlyphs">002_</text>
<text x="523.54" y="387.46" font-size="7.8" fill="#3e3e3e" letter-spacing="0.85">集計世帯数</text>
<text x="756.82" y="387.46" font-size="7.8" fill="#3e3e3e" letter-spacing="0.85">世帯</text>
<text x="824.94" y="387.46" font-size="9.7" fill="#4a4a4a" textLength="9.06" lengthAdjust="spacingAndGlyphs">27</text>
<text x="19.82" y="401.88" font-size="7.8" fill="#3e3e3e" letter-spacing="0.85">二人以上の世帯</text>
<text x="163.80" y="401.88" font-size="9.7" fill="#4a4a4a" textLength="27.78" lengthAdjust="spacingAndGlyphs">00000_</text>
<text x="192.31" y="401.88" font-size="7.8" fill="#3e3e3e" letter-spacing="0.85">全国</text>
<text x="231.60" y="401.88" font-size="9.7" fill="#4a4a4a" textLength="9.06" lengthAdjust="spacingAndGlyphs">29</text>
<text x="241.38" y="401.88" font-size="7.8" fill="#3e3e3e" letter-spacing="0.85">歳以下</text>
<text x="310.32" y="401.88" font-size="7.8" fill="#3e3e3e" letter-spacing="0.85">純貯蓄</text>
<text x="388.82" y="401.88" font-size="7.8" fill="#3e3e3e" letter-spacing="0.85">純貯蓄現在高五分位</text>
<text x="466.25" y="401.88" font-size="9.7" fill="#4a4a4a" textLength="4.38" lengthAdjust="spacingAndGlyphs">2</text>
<text x="504.40" y="401.88" font-size="9.7" fill="#4a4a4a" textLength="18.42" lengthAdjust="spacingAndGlyphs">002_</text>
<text x="523.54" y="401.88" font-size="7.8" fill="#3e3e3e" letter-spacing="0.85">集計世帯数</text>
<text x="756.82" y="401.88" font-size="7.8" fill="#3e3e3e" letter-spacing="0.85">世帯</text>
<text x="824.94" y="401.88" font-size="9.7" fill="#4a4a4a" textLength="9.06" lengthAdjust="spacingAndGlyphs">38</text>
<text x="19.82" y="416.30" font-size="7.8" fill="#3e3e3e" letter-spacing="0.85">二人以上の世帯</text>
<text x="163.80" y="416.30" font-size="9.7" fill="#4a4a4a" textLength="27.78" lengthAdjust="spacingAndGlyphs">00000_</text>
<text x="192.31" y="416.30" font-size="7.8" fill="#3e3e3e" letter-spacing="0.85">全国</text>
<text x="231.60" y="416.30" font-size="9.7" fill="#4a4a4a" textLength="9.06" lengthAdjust="spacingAndGlyphs">29</text>
<text x="241.38" y="416.30" font-size="7.8" fill="#3e3e3e" letter-spacing="0.85">歳以下</text>
<text x="310.32" y="416.30" font-size="7.8" fill="#3e3e3e" letter-spacing="0.85">純貯蓄</text>
<text x="388.82" y="416.30" font-size="7.8" fill="#3e3e3e" letter-spacing="0.85">純貯蓄現在高五分位</text>
<text x="466.25" y="416.30" font-size="9.7" fill="#4a4a4a" textLength="4.38" lengthAdjust="spacingAndGlyphs">3</text>
<text x="504.40" y="416.30" font-size="9.7" fill="#4a4a4a" textLength="18.42" lengthAdjust="spacingAndGlyphs">002_</text>
<text x="523.54" y="416.30" font-size="7.8" fill="#3e3e3e" letter-spacing="0.85">集計世帯数</text>
<text x="756.82" y="416.30" font-size="7.8" fill="#3e3e3e" letter-spacing="0.85">世帯</text>
<text x="824.94" y="416.30" font-size="9.7" fill="#4a4a4a" textLength="9.06" lengthAdjust="spacingAndGlyphs">44</text>
<text x="19.82" y="430.72" font-size="7.8" fill="#3e3e3e" letter-spacing="0.85">二人以上の世帯</text>
<text x="163.80" y="430.72" font-size="9.7" fill="#4a4a4a" textLength="27.78" lengthAdjust="spacingAndGlyphs">00000_</text>
<text x="192.31" y="430.72" font-size="7.8" fill="#3e3e3e" letter-spacing="0.85">全国</text>
<text x="231.60" y="430.72" font-size="9.7" fill="#4a4a4a" textLength="9.06" lengthAdjust="spacingAndGlyphs">29</text>
<text x="241.38" y="430.72" font-size="7.8" fill="#3e3e3e" letter-spacing="0.85">歳以下</text>
<text x="310.32" y="430.72" font-size="7.8" fill="#3e3e3e" letter-spacing="0.85">純貯蓄</text>
<text x="388.82" y="430.72" font-size="7.8" fill="#3e3e3e" letter-spacing="0.85">純貯蓄現在高五分位</text>
<text x="466.25" y="430.72" font-size="9.7" fill="#4a4a4a" textLength="4.38" lengthAdjust="spacingAndGlyphs">4</text>
<text x="504.40" y="430.72" font-size="9.7" fill="#4a4a4a" textLength="18.42" lengthAdjust="spacingAndGlyphs">002_</text>
<text x="523.54" y="430.72" font-size="7.8" fill="#3e3e3e" letter-spacing="0.85">集計世帯数</text>
<text x="756.82" y="430.72" font-size="7.8" fill="#3e3e3e" letter-spacing="0.85">世帯</text>
<text x="824.94" y="430.72" font-size="9.7" fill="#4a4a4a" textLength="9.06" lengthAdjust="spacingAndGlyphs">38</text>
<text x="19.82" y="445.14" font-size="7.8" fill="#3e3e3e" letter-spacing="0.85">二人以上の世帯</text>
<text x="163.80" y="445.14" font-size="9.7" fill="#4a4a4a" textLength="27.78" lengthAdjust="spacingAndGlyphs">00000_</text>
<text x="192.31" y="445.14" font-size="7.8" fill="#3e3e3e" letter-spacing="0.85">全国</text>
<text x="231.60" y="445.14" font-size="9.7" fill="#4a4a4a" textLength="9.06" lengthAdjust="spacingAndGlyphs">29</text>
<text x="241.38" y="445.14" font-size="7.8" fill="#3e3e3e" letter-spacing="0.85">歳以下</text>
<text x="310.32" y="445.14" font-size="7.8" fill="#3e3e3e" letter-spacing="0.85">純貯蓄</text>
<text x="388.82" y="445.14" font-size="7.8" fill="#3e3e3e" letter-spacing="0.85">純貯蓄現在高五分位</text>
<text x="466.25" y="445.14" font-size="9.7" fill="#4a4a4a" textLength="4.38" lengthAdjust="spacingAndGlyphs">5</text>
<text x="504.40" y="445.14" font-size="9.7" fill="#4a4a4a" textLength="18.42" lengthAdjust="spacingAndGlyphs">002_</text>
<text x="523.54" y="445.14" font-size="7.8" fill="#3e3e3e" letter-spacing="0.85">集計世帯数</text>
<text x="756.82" y="445.14" font-size="7.8" fill="#3e3e3e" letter-spacing="0.85">世帯</text>
<text x="824.94" y="445.14" font-size="9.7" fill="#4a4a4a" textLength="9.06" lengthAdjust="spacingAndGlyphs">36</text>
<text x="19.82" y="459.56" font-size="7.8" fill="#3e3e3e" letter-spacing="0.85">二人以上の世帯のうち勤労者世帯</text>
<text x="163.80" y="459.56" font-size="9.7" fill="#4a4a4a" textLength="27.78" lengthAdjust="spacingAndGlyphs">00000_</text>
<text x="192.31" y="459.56" font-size="7.8" fill="#3e3e3e" letter-spacing="0.85">全国</text>
<text x="231.60" y="459.56" font-size="9.7" fill="#4a4a4a" textLength="9.06" lengthAdjust="spacingAndGlyphs">29</text>
<text x="241.38" y="459.56" font-size="7.8" fill="#3e3e3e" letter-spacing="0.85">歳以下</text>
<text x="310.32" y="459.56" font-size="7.8" fill="#3e3e3e" letter-spacing="0.85">純貯蓄</text>
<text x="388.82" y="459.56" font-size="7.8" fill="#3e3e3e" letter-spacing="0.85">純貯蓄現在高五分位</text>
<text x="466.25" y="459.56" font-size="9.7" fill="#4a4a4a" textLength="4.38" lengthAdjust="spacingAndGlyphs">1</text>
<text x="504.40" y="459.56" font-size="9.7" fill="#4a4a4a" textLength="18.42" lengthAdjust="spacingAndGlyphs">002_</text>
<text x="523.54" y="459.56" font-size="7.8" fill="#3e3e3e" letter-spacing="0.85">集計世帯数</text>
<text x="756.82" y="459.56" font-size="7.8" fill="#3e3e3e" letter-spacing="0.85">世帯</text>
<text x="824.94" y="459.56" font-size="9.7" fill="#4a4a4a" textLength="9.06" lengthAdjust="spacingAndGlyphs">26</text>
</g>
<rect x="17.55" y="102.8" width="144.55" height="14.3" fill="#fff" stroke="#1a7a47" stroke-width="1"/>
<text x="19.82" y="113.48" font-size="7.8" fill="#3e3e3e" letter-spacing="0.85">二人以上の世帯</text>
<rect x="161.00" y="116.20" width="2.20" height="2.50" fill="#0f6e3a" stroke="#fff" stroke-width="0.3"/>
<rect x="912.00" y="46.60" width="12.00" height="411.20" fill="#f0f0f0" />
<path d="M915.3 53.7 L918.05 50.2 L920.8 53.7 Z" fill="#5a5a5a"/>
<rect x="915.4" y="56.9" width="5.1" height="10.1" rx="2.55" fill="#666"/>
<path d="M915.3 452.4 L918 456.2 L920.7 452.4 Z" fill="#5a5a5a"/>
<rect x="0.00" y="457.80" width="924.00" height="19.20" fill="#f0f0f0" />
<path d="M18.3 463.6 L15.8 466.6 L18.3 469.6" fill="none" stroke="#8c8c8c" stroke-width="0.9"/>
<path d="M35 463.6 L37.5 466.6 L35 469.6" fill="none" stroke="#8c8c8c" stroke-width="0.9"/>
<path d="M68.2 458 H96.8 V471.5 a2.5 2.5 0 0 1 -2.5 2.5 H70.7 a2.5 2.5 0 0 1 -2.5 -2.5 Z" fill="#fff"/>
<text x="73.20" y="469.15" font-size="9.6" fill="#222" textLength="18.20" lengthAdjust="spacingAndGlyphs" >data</text>
<rect x="73.00" y="472.00" width="19.00" height="1.00" fill="#107c41" />
<text x="108.50" y="469.55" font-size="9.6" fill="#333" textLength="20.00" lengthAdjust="spacingAndGlyphs" >pivot</text>
<line x1="137.00" y1="460.50" x2="137.00" y2="472.50" stroke="#d0d0d0" stroke-width="0.7" />
<line x1="99.60" y1="461.00" x2="99.60" y2="472.00" stroke="#dedede" stroke-width="0.7" />
<path d="M162.7 466.6 H168.7 M165.7 463.6 V469.6" stroke="#333" stroke-width="1"/>
<circle cx="556.4" cy="465" r="0.72" fill="#333"/>
<circle cx="556.4" cy="467.3" r="0.72" fill="#333"/>
<circle cx="556.4" cy="469.6" r="0.72" fill="#333"/>
<path d="M573 464.6 L569 467.2 L573 469.8 Z" fill="#5a5a5a"/>
<rect x="592.3" y="464.5" width="294.9" height="5.3" rx="2.65" fill="#6b6b6b"/>
<path d="M906 464.6 L909.9 467.2 L906 469.8 Z" fill="#5a5a5a"/>
</svg>
</body></html>
